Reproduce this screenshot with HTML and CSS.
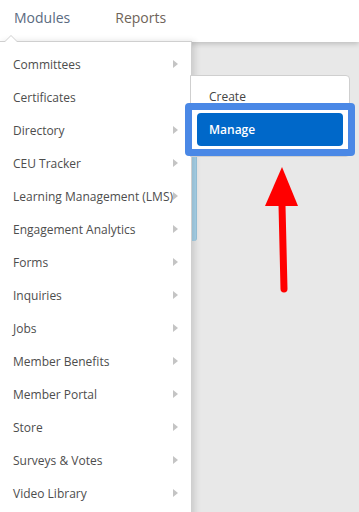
FILE: index.html
```html
<!DOCTYPE html>
<html lang="en">
<head>
    <meta charset="UTF-8">
    <meta name="viewport" content="width=device-width, initial-scale=1.0">
    <title>Modules</title>
    <link rel="stylesheet" href="styles.css">
</head>
<body>

    <header class="topbar">
        <a class="nav-link nav-modules" href="#">Modules</a>
        <a class="nav-link nav-reports" href="#">Reports</a>
    </header>

    <div class="page-panel"></div>

    <!-- Modules dropdown -->
    <div class="menu">
        <span class="menu-caret"></span>
        <ul class="menu-list">
            <li class="menu-item has-sub">Committees</li>
            <li class="menu-item">Certificates</li>
            <li class="menu-item has-sub">Directory</li>
            <li class="menu-item has-sub">CEU Tracker</li>
            <li class="menu-item has-sub">Learning Management (LMS)</li>
            <li class="menu-item has-sub">Engagement Analytics</li>
            <li class="menu-item has-sub">Forms</li>
            <li class="menu-item has-sub">Inquiries</li>
            <li class="menu-item has-sub">Jobs</li>
            <li class="menu-item has-sub">Member Benefits</li>
            <li class="menu-item has-sub">Member Portal</li>
            <li class="menu-item has-sub">Store</li>
            <li class="menu-item has-sub">Surveys &amp; Votes</li>
            <li class="menu-item has-sub">Video Library</li>
        </ul>
    </div>

    <!-- Submenu -->
    <div class="submenu">
        <div class="sub-item">Create</div>
    </div>
    <div class="callout">
        <div class="callout-inner">
            <div class="sub-item active">Manage</div>
        </div>
    </div>

    <svg class="pointer" width="40" height="130" viewBox="0 0 40 130">
        <path d="M18 38 L20 122" stroke="#ff0000" stroke-width="7" stroke-linecap="round" fill="none"/>
        <polygon points="18,0 1,39 34,39" fill="#ff0000"/>
    </svg>

</body>
</html>
```

FILE: styles.css
```css
body {
    margin: 0;
    height: 512px;
    overflow: hidden;
    background-color: #e8e8e8;
    font-family: "Open Sans", Arial, sans-serif;
    position: relative;
}
.topbar {
    height: 42px;
    background-color: white;
    box-shadow: 0 2px 5px rgba(0, 0, 0, 0.18);
    display: flex;
    align-items: flex-start;
    padding-left: 14px;
    gap: 45px;
    position: relative;
    z-index: 1;
}
.nav-link {
    font-size: 14px;
    line-height: 20px;
    margin-top: 8px;
    text-decoration: none;
}
.nav-modules {
    color: #5a6b7f;
}
.nav-reports {
    color: #6f6459;
}
.page-panel {
    position: absolute;
    left: 150px;
    top: 90px;
    width: 46px;
    height: 151px;
    background-color: #a8d3ea;
    border-right: 1px solid #98c4dc;
    border-radius: 0 0 3px 0;
}
.menu {
    position: absolute;
    left: 0;
    top: 41px;
    width: 191px;
    height: 480px;
    background-color: white;
    border-top: 1px solid #cfcfcf;
    border-right: 1px solid #cfcfcf;
    box-shadow: 3px 0 6px rgba(0, 0, 0, 0.12);
    z-index: 2;
}
.menu-caret {
    position: absolute;
    left: 4px;
    top: -7px;
    width: 0;
    height: 0;
    border-left: 7px solid transparent;
    border-right: 7px solid transparent;
    border-bottom: 7px solid #cfcfcf;
}
.menu-caret::after {
    content: "";
    position: absolute;
    left: -6px;
    top: 1px;
    border-left: 6px solid transparent;
    border-right: 6px solid transparent;
    border-bottom: 6px solid white;
}
.menu-list {
    list-style: none;
    margin: 0;
    padding: 6px 0 0 0;
}
.menu-item {
    height: 33px;
    line-height: 33px;
    padding-left: 13px;
    font-size: 12px;
    color: #4d4d4d;
    position: relative;
    white-space: nowrap;
}
.has-sub::after {
    content: "";
    position: absolute;
    left: 173px;
    top: 12px;
    border-top: 4px solid transparent;
    border-bottom: 4px solid transparent;
    border-left: 5px solid #c4c4c4;
}
.submenu {
    position: absolute;
    left: 190px;
    top: 75px;
    width: 158px;
    height: 80px;
    background-color: white;
    border: 1px solid #cfcfcf;
    border-radius: 0 4px 4px 0;
    z-index: 3;
}
.sub-item {
    font-size: 12px;
    color: #444;
    padding-left: 18px;
    line-height: 20px;
    margin-top: 11px;
}
.callout {
    position: absolute;
    left: 185px;
    top: 103px;
    width: 156px;
    height: 39px;
    padding: 7px;
    background-color: #4a88e6;
    border-radius: 4px;
    z-index: 4;
}
.callout-inner {
    background-color: white;
    height: 39px;
    padding: 3px 5px;
    box-sizing: border-box;
}
.sub-item.active {
    margin: 0;
    height: 33px;
    line-height: 33px;
    padding-left: 12px;
    background-color: #0068c9;
    color: white;
    font-weight: 600;
    border-radius: 4px;
}
.pointer {
    position: absolute;
    left: 264px;
    top: 167px;
    z-index: 5;
}
```
